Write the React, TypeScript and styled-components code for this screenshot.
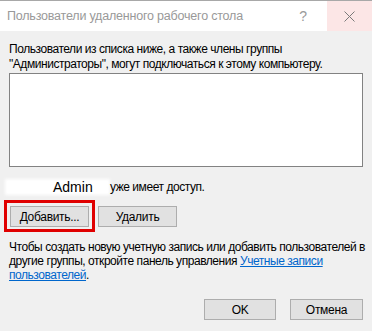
import React from 'react'
import styled, { createGlobalStyle } from 'styled-components'

const GlobalStyle = createGlobalStyle`
  html, body {
    margin: 0;
    padding: 0;
    background: #f0f0f0;
  }
  body {
    font-family: "Liberation Sans", Arial, sans-serif;
    font-size: 12px;
    letter-spacing: -0.45px;
    color: #000;
  }
`

const Window = styled.div`
  width: 372px;
  height: 331px;
  box-sizing: border-box;
  border-top: 1px solid #a8a8a8;
  background: #f0f0f0;
  display: flex;
  flex-direction: column;
  overflow: hidden;
`

const TitleBar = styled.div`
  height: 30px;
  background: #fff;
  display: flex;
  align-items: center;
  flex-shrink: 0;
`

const Title = styled.div`
  flex: 1;
  padding-left: 7px;
  color: #999;
  font-size: 12.5px;
  letter-spacing: -0.2px;
  white-space: nowrap;
`

const HelpButton = styled.div`
  width: 48px;
  height: 30px;
  display: flex;
  align-items: center;
  justify-content: center;
  color: #9a9a9a;
  font-size: 14px;
`

const CloseButton = styled.div`
  width: 45px;
  height: 30px;
  background: #fce6e6;
  display: flex;
  align-items: center;
  justify-content: center;
`

const Body = styled.div`
  padding: 11px 9px 0 9px;
  display: flex;
  flex-direction: column;
`

const Text = styled.div<{ $lh?: number }>`
  line-height: ${(p) => p.$lh ?? 15}px;
  white-space: nowrap;
`

const ListBox = styled.div`
  margin-top: 1px;
  height: 92px;
  background: #fff;
  border: 1px solid #828282;
`

const AccessLine = styled.div`
  margin-top: 12px;
  height: 16px;
  display: flex;
  align-items: center;
  white-space: nowrap;
`

const Redacted = styled.span`
  flex: 0 0 auto;
  box-sizing: border-box;
  width: 101px;
  margin-left: -2px;
  padding-left: 46px;
  height: 12px;
  line-height: 12px;
  background: #fff;
  box-shadow: 0 0 3px 2px #fff;
  font-size: 14px;
  letter-spacing: 0;
`

const AccessText = styled.span`
  margin-left: 2px;
`

const ButtonRow = styled.div<{ $justify?: string; $top: number }>`
  display: flex;
  justify-content: ${(p) => p.$justify ?? 'flex-start'};
  gap: ${(p) => (p.$justify ? 14 : 9)}px;
  margin-top: ${(p) => p.$top}px;
`

const Button = styled.button<{ $w?: number }>`
  width: ${(p) => p.$w ?? 79}px;
  height: 21px;
  padding: 0;
  background: #e1e1e1;
  border: 1px solid #adadad;
  font-family: inherit;
  font-size: 12px;
  letter-spacing: -0.3px;
  color: #000;
`

const Highlight = styled.div`
  position: relative;
  margin-left: 1px;
  &::after {
    content: '';
    position: absolute;
    inset: -6px -6px -5px -6px;
    border: 3px solid #e00000;
  }
`

const Note = styled.div`
  margin-top: 13px;
`

const Link = styled.a`
  color: #0066cc;
  text-decoration: underline;
`

export default function App() {
  return (
    <>
      <GlobalStyle />
      <Window>
        <TitleBar>
          <Title>Пользователи удаленного рабочего стола</Title>
          <HelpButton>?</HelpButton>
          <CloseButton>
            <svg width="11" height="11" viewBox="0 0 11 11">
              <path d="M0.5 0.5 L10.5 10.5 M10.5 0.5 L0.5 10.5" stroke="#7a7a7a" strokeWidth="1" />
            </svg>
          </CloseButton>
        </TitleBar>
        <Body>
          <Text>Пользователи из списка ниже, а также члены группы</Text>
          <Text>"Администраторы", могут подключаться к этому компьютеру.</Text>
          <ListBox />
          <AccessLine>
            <Redacted>Admin</Redacted>
            <AccessText>уже имеет доступ.</AccessText>
          </AccessLine>
          <ButtonRow $top={11}>
            <Highlight>
              <Button>Добавить...</Button>
            </Highlight>
            <Button>Удалить</Button>
          </ButtonRow>
          <Note>
            <Text $lh={14}>Чтобы создать новую учетную запись или добавить пользователей в</Text>
            <Text $lh={14}>
              другие группы, откройте панель управления <Link>Учетные записи</Link>
            </Text>
            <Text $lh={14}>
              <Link>пользователей</Link>.
            </Text>
          </Note>
          <ButtonRow $justify="flex-end" $top={17}>
            <Button $w={72}>OK</Button>
            <Button $w={73}>Отмена</Button>
          </ButtonRow>
        </Body>
      </Window>
    </>
  )
}
